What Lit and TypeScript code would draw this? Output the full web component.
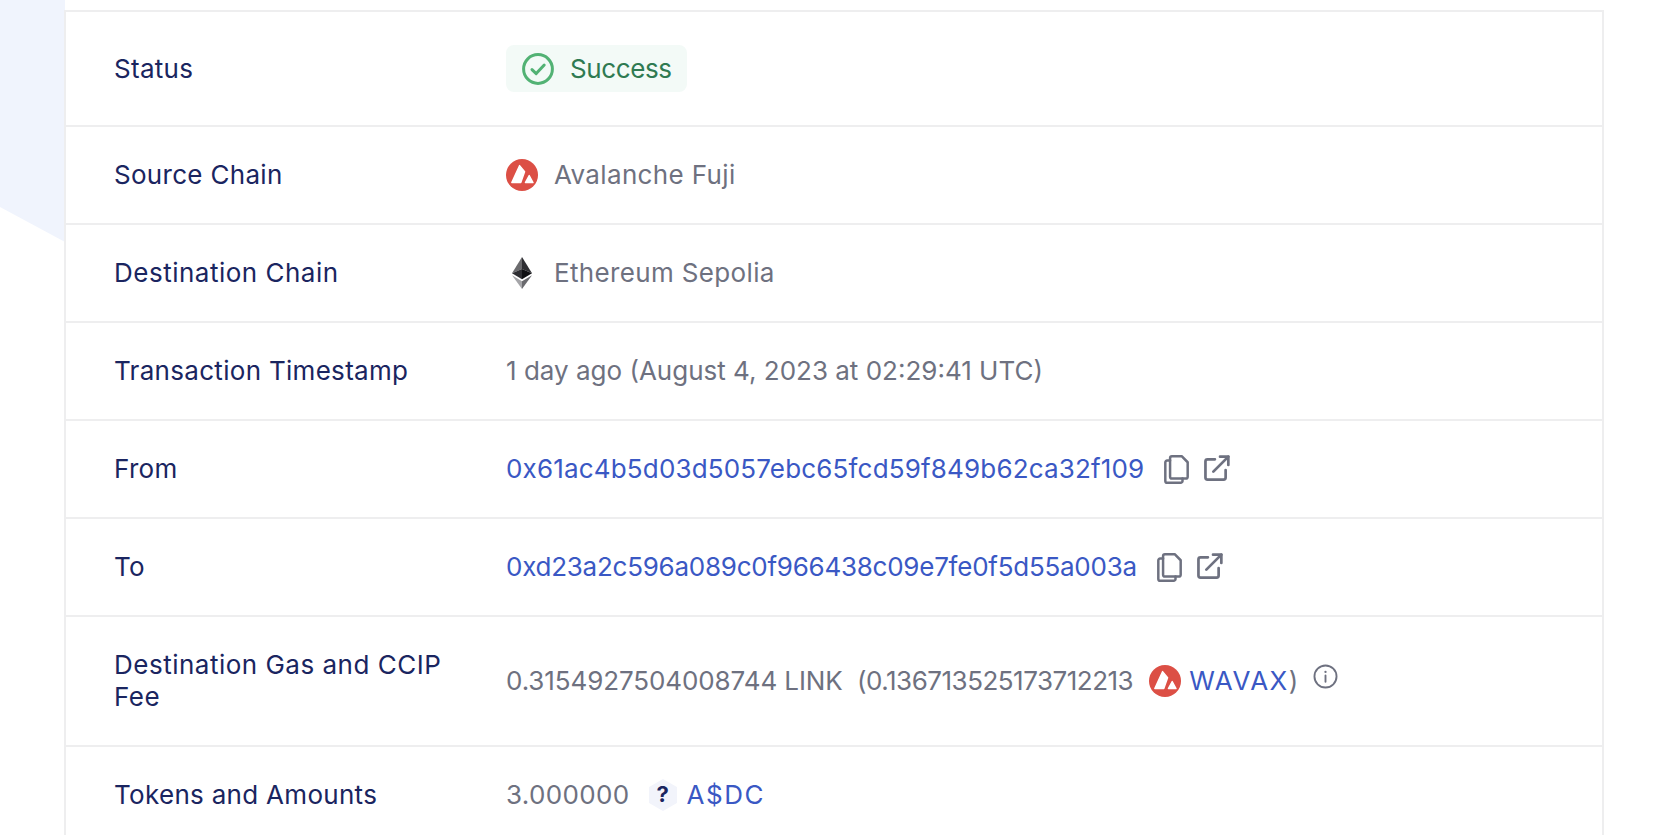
import { LitElement, html, css, svg } from "lit";
import { customElement } from "lit/decorators.js";

const avax = (cls = "chain") => html`<svg class=${cls} viewBox="0 0 32 32" aria-hidden="true">
  <circle cx="16" cy="16" r="16" fill="#dc4f45"></circle>
  <path d="M13.6 6.6 L18.6 12.8 L14.8 23.6 L5.8 23.6 Z" fill="#fff" stroke="#fff" stroke-width="1.4" stroke-linejoin="round"></path>
  <path d="M23.2 16.6 L27 23.6 L19.4 23.6 Z" fill="#fff" stroke="#fff" stroke-width="1.4" stroke-linejoin="round"></path>
</svg>`;

const eth = html`<svg class="chain" viewBox="0 0 32 32" aria-hidden="true">
  <path d="M16 0 L6 16.3 L16 12 Z" fill="#6b6b6e"></path>
  <path d="M16 0 L26 16.3 L16 12 Z" fill="#2f2f33"></path>
  <path d="M6 16.3 L16 12 V22.2 Z" fill="#2e2e32"></path>
  <path d="M26 16.3 L16 12 V22.2 Z" fill="#0f0f12"></path>
  <path d="M6 18.3 L16 32 V24.2 Z" fill="#a5a5a8"></path>
  <path d="M26 18.3 L16 32 V24.2 Z" fill="#6a6a6e"></path>
</svg>`;

const check = html`<svg class="check" viewBox="0 0 32 32" fill="none" aria-hidden="true">
  <circle cx="16" cy="16" r="14.4" stroke="#52b274" stroke-width="3"></circle>
  <path d="M10 16.6 L14.2 20.6 L22.2 12" stroke="#52b274" stroke-width="3" stroke-linecap="round" stroke-linejoin="round"></path>
</svg>`;

const copy = html`<svg class="act copy" viewBox="0 0 24 28" fill="none" stroke="#6e7180" stroke-width="2.4" stroke-linejoin="round" stroke-linecap="round" aria-hidden="true">
  <path d="M5.8 3 A1.8 1.8 0 0 1 7.6 1.2 H17 L22.8 7 V21 A1.8 1.8 0 0 1 21 22.8 H7.6 A1.8 1.8 0 0 1 5.8 21 Z"></path>
  <path d="M5.8 5.4 H3 A1.8 1.8 0 0 0 1.2 7.2 V25 A1.8 1.8 0 0 0 3 26.8 H16 A1.8 1.8 0 0 0 17.8 25 V22.8"></path>
</svg>`;

const ext = html`<svg class="act ext" viewBox="0 0 25 25" fill="none" stroke="#6e7180" stroke-width="2.6" stroke-linecap="round" stroke-linejoin="round" aria-hidden="true">
  <path d="M10.5 4.2 H3.4 A2 2 0 0 0 1.4 6.2 V21.6 A2 2 0 0 0 3.4 23.6 H18.8 A2 2 0 0 0 20.8 21.6 V14.5"></path>
  <path d="M9 16 L23.4 1.6"></path>
  <path d="M15.4 1.6 H23.4 V9.6"></path>
</svg>`;

const info = html`<svg class="info" viewBox="0 0 24 24" fill="none" aria-hidden="true">
  <circle cx="12" cy="12" r="10.6" stroke="#6e7180" stroke-width="1.8"></circle>
  <path d="M12 11 V17" stroke="#6e7180" stroke-width="1.8" stroke-linecap="round"></path>
  <circle cx="12" cy="7.6" r="1.1" fill="#6e7180"></circle>
</svg>`;

const hex = svg`<path d="M16 1 L29 8.5 V23.5 L16 31 L3 23.5 V8.5 Z" fill="#f2f4fb" stroke="#f2f4fb" stroke-width="2" stroke-linejoin="round"></path>`;

@customElement("app-root")
export class AppRoot extends LitElement {
  static styles = css`
    :host {
      display: block;
      position: relative;
      height: 835px;
      overflow: hidden;
      background: #fff;
      font-family: Inter, "Liberation Sans", sans-serif;
      font-size: 26px;
      line-height: 32px;
      color: #6e7180;
    }
    .shade {
      position: absolute;
      left: 0;
      top: 0;
      width: 65px;
      height: 242px;
      background: #f0f4fd;
      clip-path: polygon(0 0, 100% 0, 100% 100%, 0 207px);
    }
    .page {
      position: relative;
      padding-top: 10px;
      padding-left: 64px;
      width: 1540px;
    }
    .card {
      border-left: 2px solid #eeeeef;
      border-right: 2px solid #eeeeef;
      background: #fff;
      height: 840px;
    }
    .row {
      display: grid;
      grid-template-columns: 392px 1fr;
      padding: 32px 0 32px 48px;
      border-top: 2px solid #eeeeef;
      align-items: center;
    }
    .row.status { padding: 33px 0 33px 48px; }
    .label { color: #1a2560; letter-spacing: 0.3px; max-width: 360px; }
    .label.wide { letter-spacing: 0.5px; }
    .value { display: flex; align-items: center; white-space: nowrap; }
    .spaced { letter-spacing: 0.35px; }
    .addr-from { letter-spacing: 0.17px; }
    .addr-to { letter-spacing: -0.25px; }
    .caps { letter-spacing: 1.5px; }
    .link-amount { letter-spacing: -0.1px; white-space: pre; }
    .paren { letter-spacing: -0.5px; }
    .badge {
      display: inline-flex;
      align-items: center;
      gap: 16px;
      height: 47px;
      padding: 0 15px 0 16px;
      background: #f3faf7;
      border-radius: 8px;
      color: #2f7a52;
      letter-spacing: -0.4px;
    }
    .check { width: 32px; height: 32px; }
    .chain { width: 32px; height: 32px; flex: none; margin-right: 16px; }
    .avax-inline { width: 32px; height: 32px; flex: none; margin: 0 8px 0 16px; }
    a { color: #3a58c4; text-decoration: none; }
    .actions { display: inline-flex; align-items: center; gap: 15px; margin-left: 20px; }
    .act { flex: none; }
    .copy { width: 25px; height: 29px; }
    .ext { width: 26px; height: 26px; margin-top: -3px; }
    .info { width: 25px; height: 25px; margin: -10px 0 0 15px; flex: none; }
    .hex { width: 32px; height: 32px; flex: none; margin: 0 8px 0 17px; position: relative; display: inline-flex; align-items: center; justify-content: center; }
    .hex svg { width: 32px; height: 32px; }
    .hex b { position: absolute; inset: 0; text-align: center; font-size: 22px; line-height: 30px; font-weight: 700; color: #1a2560; }
  `;

  render() {
    return html`
      <div class="shade"></div>
      <div class="page">
        <div class="card">
          <div class="row status">
            <div class="label">Status</div>
            <div class="value"><span class="badge">${check}Success</span></div>
          </div>
          <div class="row">
            <div class="label">Source Chain</div>
            <div class="value spaced">${avax()}Avalanche Fuji</div>
          </div>
          <div class="row">
            <div class="label wide">Destination Chain</div>
            <div class="value spaced">${eth}Ethereum Sepolia</div>
          </div>
          <div class="row">
            <div class="label">Transaction Timestamp</div>
            <div class="value">1 day ago (August 4, 2023 at 02:29:41 UTC)</div>
          </div>
          <div class="row">
            <div class="label">From</div>
            <div class="value"><a class="addr-from">0x61ac4b5d03d5057ebc65fcd59f849b62ca32f109</a><span class="actions">${copy}${ext}</span></div>
          </div>
          <div class="row">
            <div class="label">To</div>
            <div class="value"><a class="addr-to">0xd23a2c596a089c0f966438c09e7fe0f5d55a003a</a><span class="actions">${copy}${ext}</span></div>
          </div>
          <div class="row">
            <div class="label wide">Destination Gas and CCIP Fee</div>
            <div class="value"><span class="link-amount">0.3154927504008744 LINK  </span><span class="paren">(0.136713525173712213</span>${avax("avax-inline")}<a class="caps">WAVAX</a>)${info}</div>
          </div>
          <div class="row">
            <div class="label">Tokens and Amounts</div>
            <div class="value"><span class="spaced">3.000000</span><span class="hex"><svg viewBox="0 0 32 32">${hex}</svg><b>?</b></span><a class="caps">A$DC</a></div>
          </div>
        </div>
      </div>
    `;
  }
}
